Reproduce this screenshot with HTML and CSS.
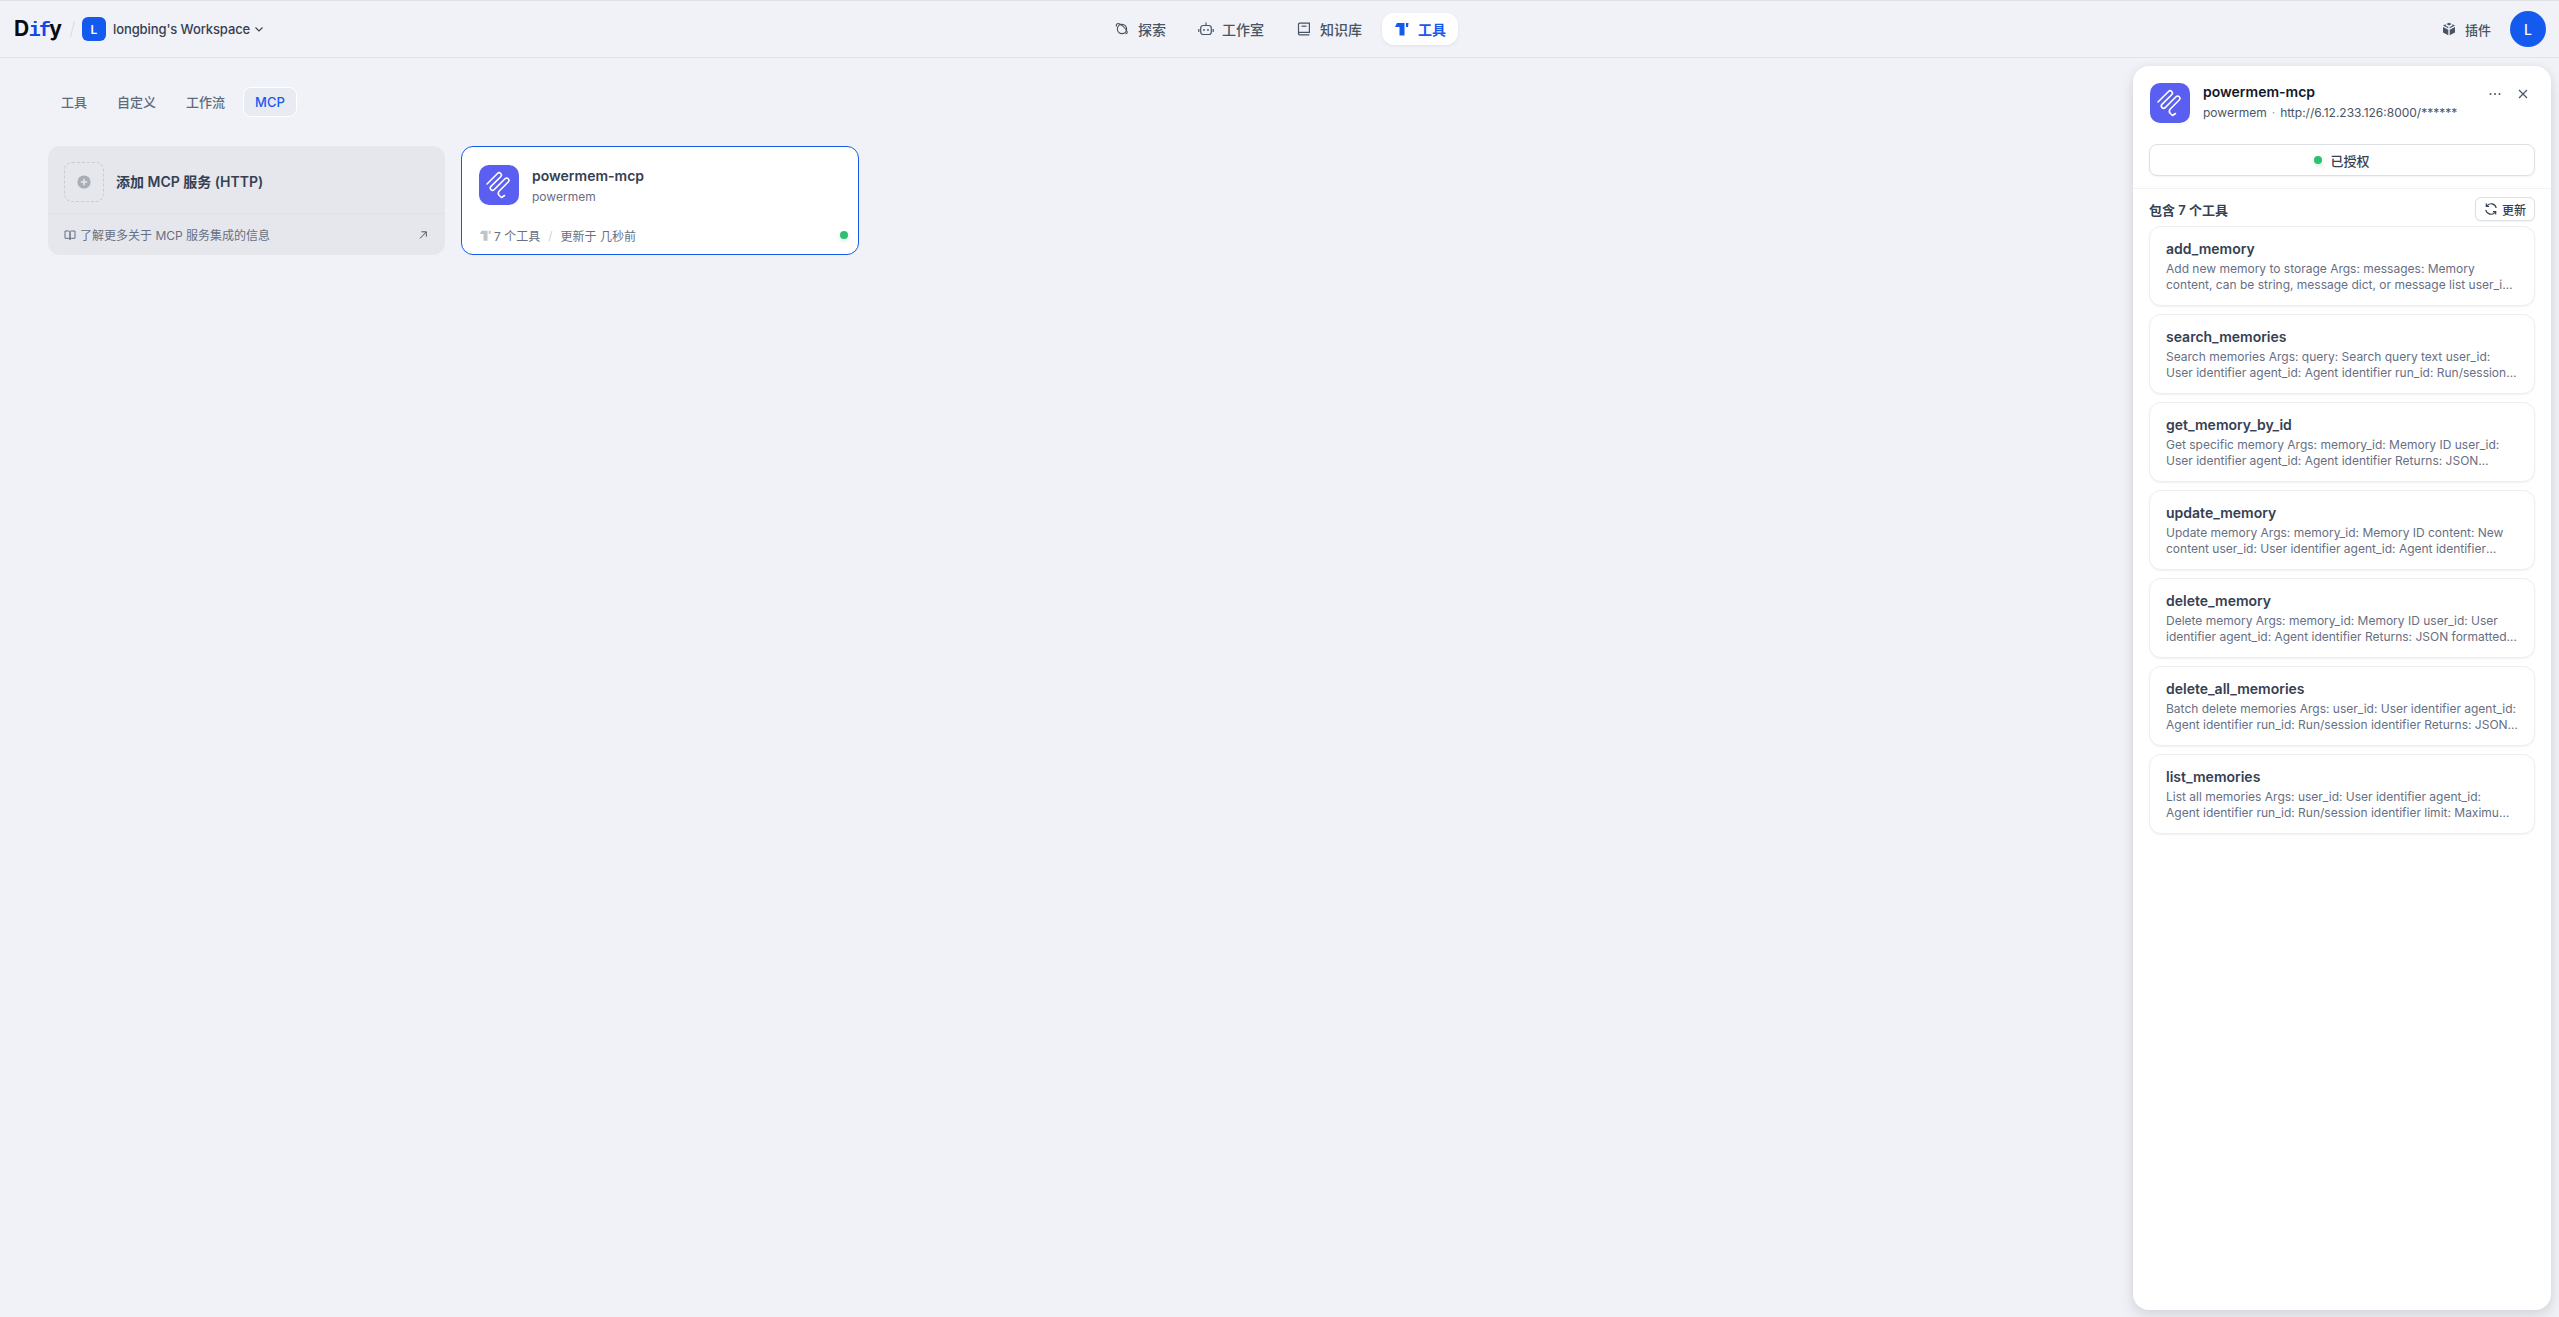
FILE: index.html
```html
<!DOCTYPE html>
<html lang="zh">
<head>
<meta charset="utf-8">
<title>Dify</title>
<link rel="stylesheet" href="styles.css">
</head>
<body>
<header class="topbar">
  <div class="top-left">
    <span class="logo">D<span class="logo-if">if</span>y</span>
    <span class="slash"></span>
    <span class="ws-badge">L</span>
    <span class="ws-name">longbing's Workspace</span>
    <svg class="chev" viewBox="0 0 12 12" width="12" height="12"><path d="M2.5 4.500 6 8l3.500-3.500" fill="none" stroke="#354052" stroke-width="1.100"/></svg>
  </div>
  <nav class="top-nav">
    <a class="nav-item"><svg viewBox="-1 -1 16 16" width="16" height="16" fill="none" stroke="#495464" stroke-width="1.200"><circle cx="7" cy="7" r="4.600"/><path d="M2.200 1.800c1.600-.7 3.200.3 5.300 2.100 2.300 2 4.200 4.300 4.600 6 .3 1.300-.6 1.800-1.500 1.700M2.200 1.800C1.300 2.300 1 3.300 1.500 4.500"/></svg>探索</a>
    <a class="nav-item"><svg viewBox="0 0 16 16" width="16" height="16" fill="none" stroke="#495464" stroke-width="1.200"><rect x="2.700" y="4.500" width="10.600" height="9" rx="2.500"/><path d="M8 4.500V2.500M.8 8v3M15.200 8v3"/><circle cx="8" cy="1.900" r=".7" fill="#495464" stroke="none"/><circle cx="6" cy="9" r=".9" fill="#495464" stroke="none"/><circle cx="10" cy="9" r=".9" fill="#495464" stroke="none"/></svg>工作室</a>
    <a class="nav-item"><svg viewBox="-1 -1 16 16" width="16" height="16" fill="none" stroke="#495464" stroke-width="1.200"><path d="M1.500 11.500V2.300c0-.6.500-1.100 1.100-1.100h9.800v9.100H2.700c-.7 0-1.200.5-1.200 1.200s.5 1.300 1.200 1.300h9.700"/><path d="M4.500 4.200h5"/></svg>知识库</a>
    <a class="nav-item active"><svg viewBox="0 0 16 16" width="16" height="16" fill="#155aef"><path d="M3 2H10.500V14.500H5.500V6H1z"/><path d="M12 2h2.500L14 6h-2z"/></svg>工具</a>
  </nav>
  <div class="top-right">
    <a class="plugin"><svg viewBox="0 0 14 14" width="14" height="14" fill="#495464"><path d="M7 .7 9.600 2 7 3.400 4.400 2zM1.400 3.300l2.300-1.100v1.500L6.300 5v1.300L1.400 3.700zM12.600 3.300v.4L7.700 6.300V5l2.600-1.300V2.200zM1 5l5.300 2.700v5.600L1 10.600zM13 5v5.600l-5.300 2.700V7.700z"/></svg>插件</a>
    <span class="avatar">L</span>
  </div>
</header>

<main class="content">
  <div class="tabs">
    <a class="tab">工具</a>
    <a class="tab">自定义</a>
    <a class="tab">工作流</a>
    <a class="tab tab-active">MCP</a>
  </div>
  <div class="cards">
    <section class="card add-card">
      <div class="add-top">
        <span class="add-icon"><svg viewBox="0 0 14 14" width="14" height="14"><circle cx="7" cy="7" r="6.600" fill="#a9adb6"/><path d="M7 3.800v6.400M3.800 7h6.400" stroke="#e6e8ed" stroke-width="1.500"/></svg></span>
        <span class="add-title">添加 MCP 服务 (HTTP)</span>
      </div>
      <div class="add-foot">
        <svg viewBox="0 0 12 12" width="12" height="12" fill="none" stroke="#676f83"><path d="M1 2h3.500c.8 0 1.500.6 1.500 1.400V10.500c0-.7-.5-1.200-1.200-1.200H1zM11 2H7.500C6.700 2 6 2.600 6 3.400v7.100c0-.7.5-1.200 1.200-1.200H11z"/></svg>
        <span class="add-link">了解更多关于 MCP 服务集成的信息</span>
        <svg viewBox="0 0 12 12" width="12" height="12" fill="none" stroke="#495464"><path d="M3 9.500 9.200 3M4.500 2.800h4.800v4.800"/></svg>
      </div>
    </section>
    <section class="card mcp-card">
      <div class="mcp-top">
        <span class="app-icon"><svg viewBox="0 0 40 40" width="40" height="40" fill="none" stroke="#fff" stroke-width="1.600" stroke-linecap="round" stroke-linejoin="round"><path d="M8 19 18.500 8.500A2.260 2.260 0 0 1 21.700 11.700L12 21.400A2.260 2.260 0 0 0 15.200 24.600L26 13.800A2.260 2.260 0 0 1 29.200 17L20.500 25.700C19 27.200 19 29 20.300 30.500L22.500 32.500 25.500 30.500"/></svg></span>
        <div class="mcp-info">
          <div class="mcp-name">powermem-mcp</div>
          <div class="mcp-org">powermem</div>
        </div>
      </div>
      <div class="mcp-foot">
        <svg viewBox="0 0 16 16" width="13" height="13" fill="#bfc3cb"><path d="M3 2H10.500V14.500H5.500V6H1z"/><path d="M12 2h2.500L14 6h-2z"/></svg>
        <span>7 个工具</span>
        <span class="foot-sep">/</span>
        <span>更新于 几秒前</span>
        <span class="dot foot-dot"></span>
      </div>
    </section>
  </div>
</main>

<aside class="panel">
  <div class="panel-head">
    <span class="app-icon panel-icon"><svg viewBox="0 0 40 40" width="40" height="40" fill="none" stroke="#fff" stroke-width="1.600" stroke-linecap="round" stroke-linejoin="round"><path d="M8 19 18.500 8.500A2.260 2.260 0 0 1 21.700 11.700L12 21.400A2.260 2.260 0 0 0 15.200 24.600L26 13.800A2.260 2.260 0 0 1 29.200 17L20.500 25.700C19 27.200 19 29 20.300 30.500L22.500 32.500 25.500 30.500"/></svg></span>
    <div class="panel-info">
      <div class="panel-name">powermem-mcp</div>
      <div class="panel-sub"><span>powermem</span><span class="sub-dot">·</span><span>http://6.12.233.126:8000/******</span></div>
    </div>
    <div class="panel-actions">
      <svg viewBox="0 0 14 14" width="14" height="14" fill="#495464"><circle cx="2.500" cy="7" r="1"/><circle cx="7" cy="7" r="1"/><circle cx="11.500" cy="7" r="1"/></svg>
      <svg viewBox="0 0 14 14" width="14" height="14" fill="none" stroke="#495464" stroke-width="1.200"><path d="m3 3 8 8M11 3l-8 8"/></svg>
    </div>
  </div>
  <button class="auth-btn"><span class="dot"></span>已授权</button>
  <div class="panel-divider"></div>
  <div class="tools-head">
    <span class="tools-count">包含 7 个工具</span>
    <button class="refresh"><svg viewBox="0 0 14 14" width="14" height="14" fill="none" stroke="#354052" stroke-width="1.200"><path d="M12.200 6A5.300 5.300 0 0 0 2.700 4M1.800 8a5.300 5.300 0 0 0 9.500 2"/><path d="M2.300 1.500v2.800h2.800M11.700 12.500V9.700H8.900"/></svg>更新</button>
  </div>
  <div class="tool-list">
    <article class="tool"><h3>add_memory</h3><p>Add new memory to storage Args: messages: Memory content, can be string, message dict, or message list user_id: User identifier agent_id: Agent identifier</p></article>
    <article class="tool"><h3>search_memories</h3><p>Search memories Args: query: Search query text user_id: User identifier agent_id: Agent identifier run_id: Run/session identifier limit: Maximum results</p></article>
    <article class="tool"><h3>get_memory_by_id</h3><p>Get specific memory Args: memory_id: Memory ID user_id: User identifier agent_id: Agent identifier Returns: JSON formatted memory data with details</p></article>
    <article class="tool"><h3>update_memory</h3><p>Update memory Args: memory_id: Memory ID content: New content user_id: User identifier agent_id: Agent identifier metadata: Optional metadata to update</p></article>
    <article class="tool"><h3>delete_memory</h3><p>Delete memory Args: memory_id: Memory ID user_id: User identifier agent_id: Agent identifier Returns: JSON formatted result of the deletion</p></article>
    <article class="tool"><h3>delete_all_memories</h3><p>Batch delete memories Args: user_id: User identifier agent_id: Agent identifier run_id: Run/session identifier Returns: JSON formatted result of the deletion</p></article>
    <article class="tool"><h3>list_memories</h3><p>List all memories Args: user_id: User identifier agent_id: Agent identifier run_id: Run/session identifier limit: Maximum number of results to return</p></article>
  </div>
</aside>
</body>
</html>
```

FILE: styles.css
```css
* { box-sizing: border-box; }
html, body { margin: 0; height: 100%; }
body {
  background: #f0f2f7;
  color: #354052;
  font-family: Inter, "Noto Sans CJK SC", sans-serif;
  overflow: hidden;
  position: relative;
  border-top: 1px solid #dfe1e5;
}
.topbar {
  height: 57px;
  border-bottom: 1px solid #e1e3e8;
  display: grid;
  grid-template-columns: 1fr auto 1fr;
  align-items: center;
  padding: 0 13px 0 14px;
}
.top-left, .top-right, .top-nav { display: flex; align-items: center; }
.logo { font-size: 21px; font-weight: 700; color: #0b0b0e; line-height: 1; white-space: nowrap; width: 49px; flex: none; }
.logo-if { color: #1447e6; font-family: "Liberation Mono", monospace; font-size: 20px; font-weight: 700; letter-spacing: -1.7px; margin-left: -0.5px; }
.slash { width: 1px; height: 16px; background: #d8dbe1; transform: rotate(14deg); margin: 0 9px; flex: none; }
.ws-badge {
  width: 24px; height: 24px; border-radius: 6px; background: #155aef; color: #fff;
  font-size: 12px; font-weight: 600; display: flex; align-items: center; justify-content: center;
}
.ws-name { font-size: 13px; font-weight: 500; margin-left: 7px; color: #354052; letter-spacing: -0.1px; }
.chev { margin-left: 3px; }
.top-nav { gap: 8px; }
.nav-item {
  height: 32px; display: flex; align-items: center; gap: 8px; padding: 0 12px;
  font-size: 14px; font-weight: 500; color: #495464; border-radius: 12px;
}
.nav-item.active { background: #fff; color: #155aef; box-shadow: 0 1px 3px rgba(16,24,40,.08); font-weight: 600; }
.top-right { justify-content: flex-end; gap: 19px; }
.plugin { display: flex; align-items: center; gap: 9px; font-size: 13px; color: #495464; font-weight: 500; }
.avatar {
  width: 36px; height: 36px; border-radius: 50%; background: #155aef; color: #fff;
  font-size: 14px; font-weight: 500; display: flex; align-items: center; justify-content: center;
}
.content { padding: 29px 48px 0; }
.tabs { display: flex; align-items: center; height: 30px; gap: 6px; margin-left: 1px; }
.tab { padding: 0 12px; font-size: 13px; font-weight: 500; color: #5f6b7c; line-height: 28px; }
.tab-active {
  color: #155aef; background: #e9ebf2; border: 1px solid #fff; border-radius: 8px;
  height: 30px; padding: 0 11px;
}
.cards { display: grid; grid-template-columns: 397px 398px; gap: 16px; margin-top: 29px; }
.card { height: 109px; border-radius: 12px; }
.add-card { background: #e5e7ec; display: flex; flex-direction: column; }
.add-top { height: 68px; display: flex; align-items: flex-start; gap: 12px; padding: 16px 16px 0; border-bottom: 1px solid #dfe1e7; }
.add-icon {
  width: 40px; height: 40px; border: 1px dashed #c8ccd3; border-radius: 8px;
  display: flex; align-items: center; justify-content: center;
}
.add-title { font-size: 14px; font-weight: 600; color: #354052; line-height: 40px; }
.add-foot { height: 41px; display: flex; align-items: center; gap: 4px; padding: 0 16px; }
.add-link { font-size: 12px; color: #676f83; flex: 1; }
.mcp-card { background: #fff; border: 1px solid #155aef; padding: 18px 10px 0 17px; display: flex; flex-direction: column; }
.mcp-top { display: flex; gap: 13px; }
.app-icon {
  width: 40px; height: 40px; border-radius: 10px; background: #5a5ff2; display: block; flex: none;
}
.app-icon svg { display: block; }
.mcp-info { padding-top: 1px; }
.mcp-name { font-size: 14px; font-weight: 600; color: #354052; line-height: 20px; }
.mcp-org { font-size: 12px; color: #676f83; line-height: 18px; margin-top: 2px; }
.mcp-foot {
  margin-top: 21px; display: flex; align-items: center; font-size: 12px; color: #676f83; gap: 2px; height: 16px;
}
.foot-sep { color: #d0d3da; margin: 0 6px; }
.foot-dot { margin-left: auto; }
.dot {
  width: 8px; height: 8px; border-radius: 50%; background: #2fbf71; display: inline-block;
  box-shadow: 0 2px 4px rgba(47,191,113,.25);
}
.panel {
  position: absolute; left: 2133px; top: 65px; width: 418px; height: 1244px;
  background: #fff; border-radius: 16px; box-shadow: 0 8px 16px rgba(16,24,40,.1), 0 0 8px rgba(16,24,40,.05);
  padding: 0 16px;
}
.panel-head { display: flex; padding-top: 17px; height: 78px; gap: 13px; }
.panel-icon { margin-left: 1px; }
.panel-info { flex: 1; min-width: 0; }
.panel-name { font-size: 14px; font-weight: 600; color: #101828; line-height: 20px; margin-top: -1px; }
.panel-sub { font-size: 12px; color: #495464; line-height: 18px; margin-top: 2px; display: flex; gap: 5px; }
.sub-dot { color: #98a2b2; }
.panel-actions { display: flex; gap: 14px; padding-right: 5px; height: 20px; align-items: center; margin-top: 1px; }
.auth-btn {
  display: flex; align-items: center; justify-content: center; gap: 8px; width: 100%; height: 32px;
  border: 1px solid #dcdfe4; background: #fff; border-radius: 8px; font: inherit; font-size: 13px; font-weight: 500; color: #354052;
  box-shadow: 0 1px 2px rgba(16,24,40,.05);
}
.panel-divider { height: 1px; background: #f0f2f5; margin: 12px -16px 0; }
.tools-head { display: flex; align-items: center; justify-content: space-between; height: 24px; margin-top: 8px; }
.tools-count { font-size: 13px; font-weight: 600; color: #354052; }
.refresh {
  display: flex; align-items: center; gap: 4px; height: 24px; width: 60px; padding: 0 8px;
  border: 1px solid #dcdfe4; border-radius: 6px; background: #fff; font: inherit; font-size: 12px; font-weight: 500; color: #354052;
  box-shadow: 0 1px 2px rgba(16,24,40,.05);
}
.tool-list { display: flex; flex-direction: column; gap: 8px; margin-top: 5px; }
.tool {
  height: 80px; border: 1px solid #eceef2; border-radius: 12px; padding: 12px 16px; background: #fff;
  box-shadow: 0 1px 2px rgba(16,24,40,.05);
}
.tool h3 { margin: 0; font-size: 14px; font-weight: 600; line-height: 20px; color: #354052; }
.tool p {
  margin: 2px 0 0; font-size: 12px; line-height: 16px; color: #676f83;
  display: -webkit-box; -webkit-box-orient: vertical; -webkit-line-clamp: 2; overflow: hidden;
}
```
